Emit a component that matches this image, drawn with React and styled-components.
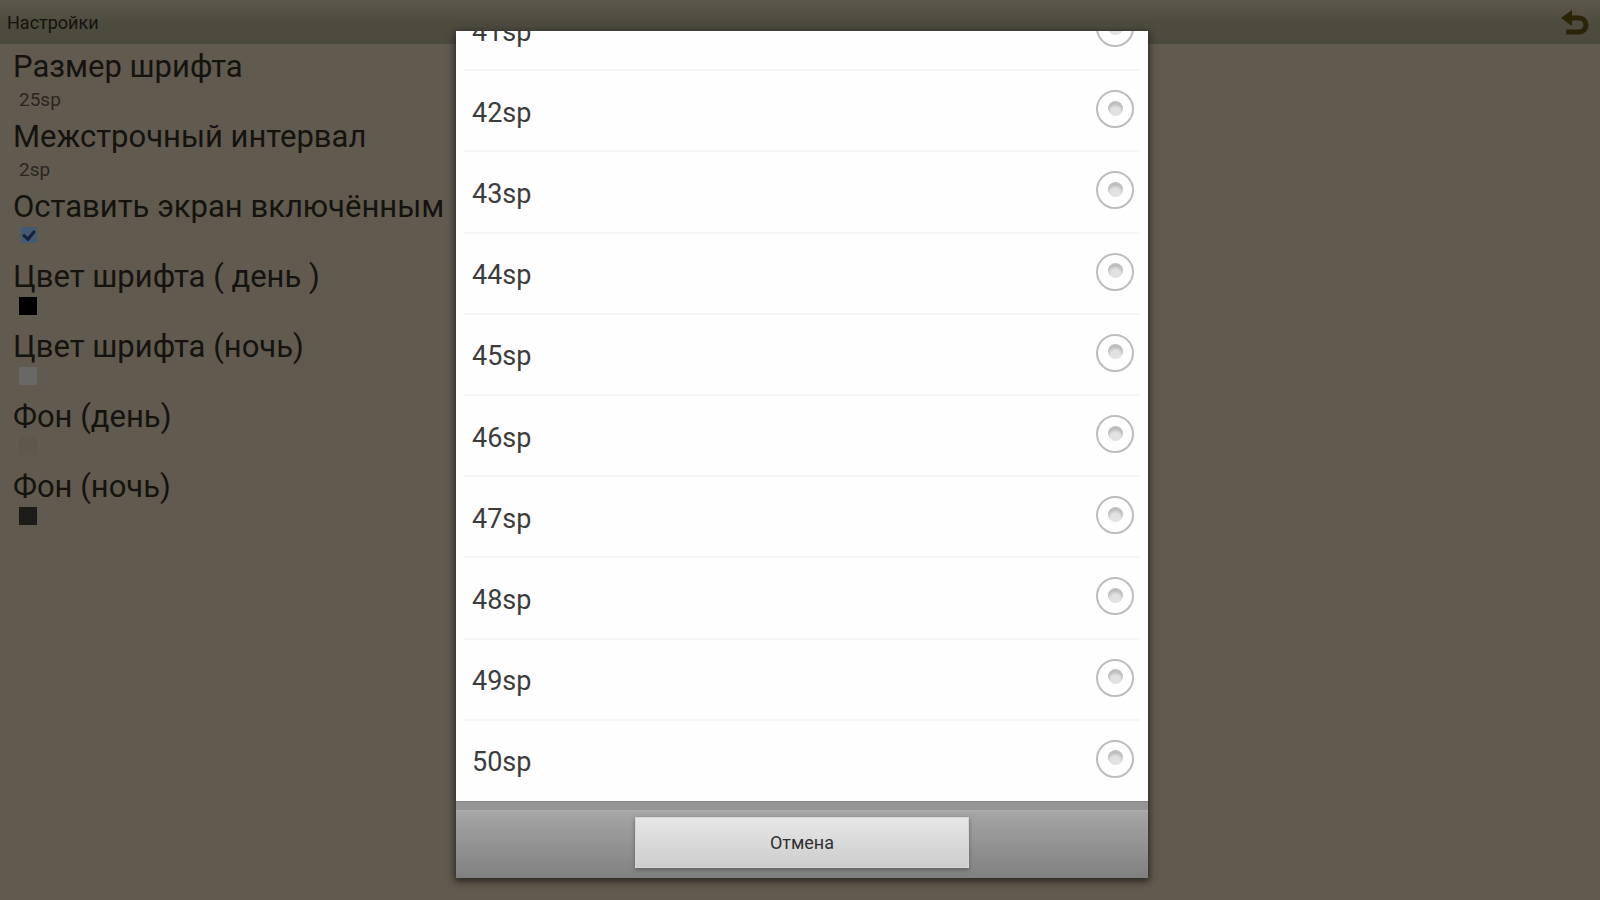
import { useState } from 'react';
import styled, { createGlobalStyle } from 'styled-components';

const sizes = [41, 42, 43, 44, 45, 46, 47, 48, 49, 50];

const colors = [
    { id: 'font-day', title: 'Цвет шрифта ( день )', value: '#000000' },
    { id: 'font-night', title: 'Цвет шрифта (ночь)', value: '#696865' },
    { id: 'back-day', title: 'Фон (день)', value: '#5c584c' },
    { id: 'back-night', title: 'Фон (ночь)', value: '#1c1c19' },
];

const App = () => {
    const [size, setSize] = useState(25);
    const [open, setOpen] = useState(true);
    const [keepOn, setKeepOn] = useState(true);

    const pickHandler = (value) => {
        setSize(value);
        setOpen(false);
    };

    return (
        <>
            <GlobalStyle />
            <Header>
                <h1>Настройки</h1>
                <BackButton type="button" aria-label="Назад">
                    <svg width="28" height="26" viewBox="0 0 28 26">
                        <path d="M0 8 L11 0 V16 Z" fill="#2b2408" />
                        <path d="M9 8 H18 A7 7 0 0 1 18 22 H5" fill="none" stroke="#2b2408" strokeWidth="5" />
                    </svg>
                </BackButton>
            </Header>
            <Settings>
                <Setting>
                    <Title as="h2">Размер шрифта</Title>
                    <Value type="button" onClick={() => setOpen(true)}>
                        {size}sp
                    </Value>
                </Setting>
                <Setting>
                    <Title as="h2">Межстрочный интервал</Title>
                    <Value type="button">2sp</Value>
                </Setting>
                <Setting>
                    <Title htmlFor="keep-on">Оставить экран включённым</Title>
                    <Checkbox id="keep-on" type="checkbox" checked={keepOn} onChange={() => setKeepOn(!keepOn)} />
                </Setting>
                {colors.map((color) => (
                    <Setting key={color.id}>
                        <Title htmlFor={color.id}>{color.title}</Title>
                        <Swatch id={color.id} type="color" defaultValue={color.value} />
                    </Setting>
                ))}
            </Settings>
            {open && (
                <Overlay>
                    <Dialog role="dialog" aria-modal="true">
                        <List>
                            <Options>
                                {sizes.map((value) => (
                                    <Option key={value}>
                                        {value}sp
                                        <Radio
                                            type="radio"
                                            name="size"
                                            checked={size === value}
                                            onChange={() => pickHandler(value)}
                                        />
                                    </Option>
                                ))}
                            </Options>
                        </List>
                        <Footer>
                            <CancelButton type="button" onClick={() => setOpen(false)}>
                                Отмена
                            </CancelButton>
                        </Footer>
                    </Dialog>
                </Overlay>
            )}
        </>
    );
};

const GlobalStyle = createGlobalStyle`
    * {
        box-sizing: border-box;
    }
    body {
        margin: 0;
        min-height: 100vh;
        background: #615a4f;
        color: #14130e;
        font-family: Roboto, 'Liberation Sans', sans-serif;
    }
    button, input {
        font-family: inherit;
        color: inherit;
        margin: 0;
        padding: 0;
    }
`;

const Header = styled.header`
    display: flex;
    align-items: center;
    justify-content: space-between;
    height: 44px;
    padding: 0 11px 0 7px;
    background: linear-gradient(#5c594c, #4e4b3f 50%, #4c493d);
    h1 {
        margin: 0;
        font-size: 18px;
        font-weight: 400;
    }
`;

const BackButton = styled.button`
    display: flex;
    padding-top: 2px;
    border: 0;
    background: none;
`;

const Settings = styled.main`
    display: flex;
    flex-direction: column;
    padding: 3px 13px;
`;

const Setting = styled.section`
    display: flex;
    flex-direction: column;
    align-items: flex-start;
    height: 70px;
`;

const Title = styled.label`
    margin: 0;
    font-size: 31px;
    font-weight: 400;
    line-height: 40px;
    white-space: nowrap;
`;

const Value = styled.button`
    margin-left: 6px;
    border: 0;
    background: none;
    font-size: 19px;
    line-height: 26px;
    color: #292720;
`;

const Checkbox = styled.input`
    appearance: none;
    width: 16px;
    height: 16px;
    margin-left: 8px;
    background: #435a75;
    display: grid;
    place-items: center;
    &:checked::before {
        content: '';
        width: 9px;
        height: 5px;
        margin-bottom: 3px;
        border: solid #14213c;
        border-width: 0 0 3px 3px;
        transform: rotate(-50deg);
    }
`;

const Swatch = styled.input`
    appearance: none;
    width: 18px;
    height: 18px;
    margin-left: 6px;
    border: 0;
    background: none;
    &::-webkit-color-swatch-wrapper {
        padding: 0;
    }
    &::-webkit-color-swatch {
        border: 0;
    }
`;

const Overlay = styled.div`
    position: fixed;
    inset: 0;
    display: flex;
    justify-content: center;
    padding: 31px 0 22px 4px;
`;

const Dialog = styled.div`
    display: flex;
    flex-direction: column;
    width: 692px;
    max-width: 100%;
    box-shadow: 0 2px 7px 1px #24231d;
`;

const List = styled.div`
    display: flex;
    flex-direction: column;
    justify-content: flex-end;
    flex: 1;
    min-height: 0;
    overflow: hidden;
    background: #fefefe;
`;

const Options = styled.div`
    display: grid;
    grid-auto-rows: 1fr;
    flex-shrink: 0;
    height: 812px;
    margin-bottom: -1px;
`;

const Option = styled.label`
    display: flex;
    align-items: center;
    justify-content: space-between;
    margin: 0 8px;
    padding: 4px 6px 0 8px;
    border-bottom: 2px solid #f6f6f6;
    font-size: 27px;
    color: #3c3c3c;
    &:last-child {
        border-color: transparent;
    }
`;

const Radio = styled.input`
    appearance: none;
    width: 38px;
    height: 38px;
    margin-bottom: 7px;
    border: 2px solid #bdbdbd;
    border-radius: 50%;
    display: grid;
    place-items: center;
    &::before {
        content: '';
        width: 15px;
        height: 15px;
        margin-bottom: 2px;
        border-radius: 50%;
        background: radial-gradient(circle at 50% 75%, #e2e2e2 35%, #bcbcbc 65%, #c8c8c8);
    }
    &:checked::before {
        background: #33b5e5;
    }
`;

const Footer = styled.footer`
    display: flex;
    justify-content: center;
    height: 77px;
    padding-top: 15px;
    border-top: 1px solid #858585;
    background: linear-gradient(#959595 8px, #aeaeae 8px, #a5a5a5 11px, #808080);
`;

const CancelButton = styled.button`
    width: 334px;
    height: 51px;
    border: 1px solid #d6d6d6;
    background: linear-gradient(#e7e7e7, #cdcdcd);
    box-shadow: 0 2px 4px #606060;
    font-size: 18px;
    color: #303030;
`;

export default App;
